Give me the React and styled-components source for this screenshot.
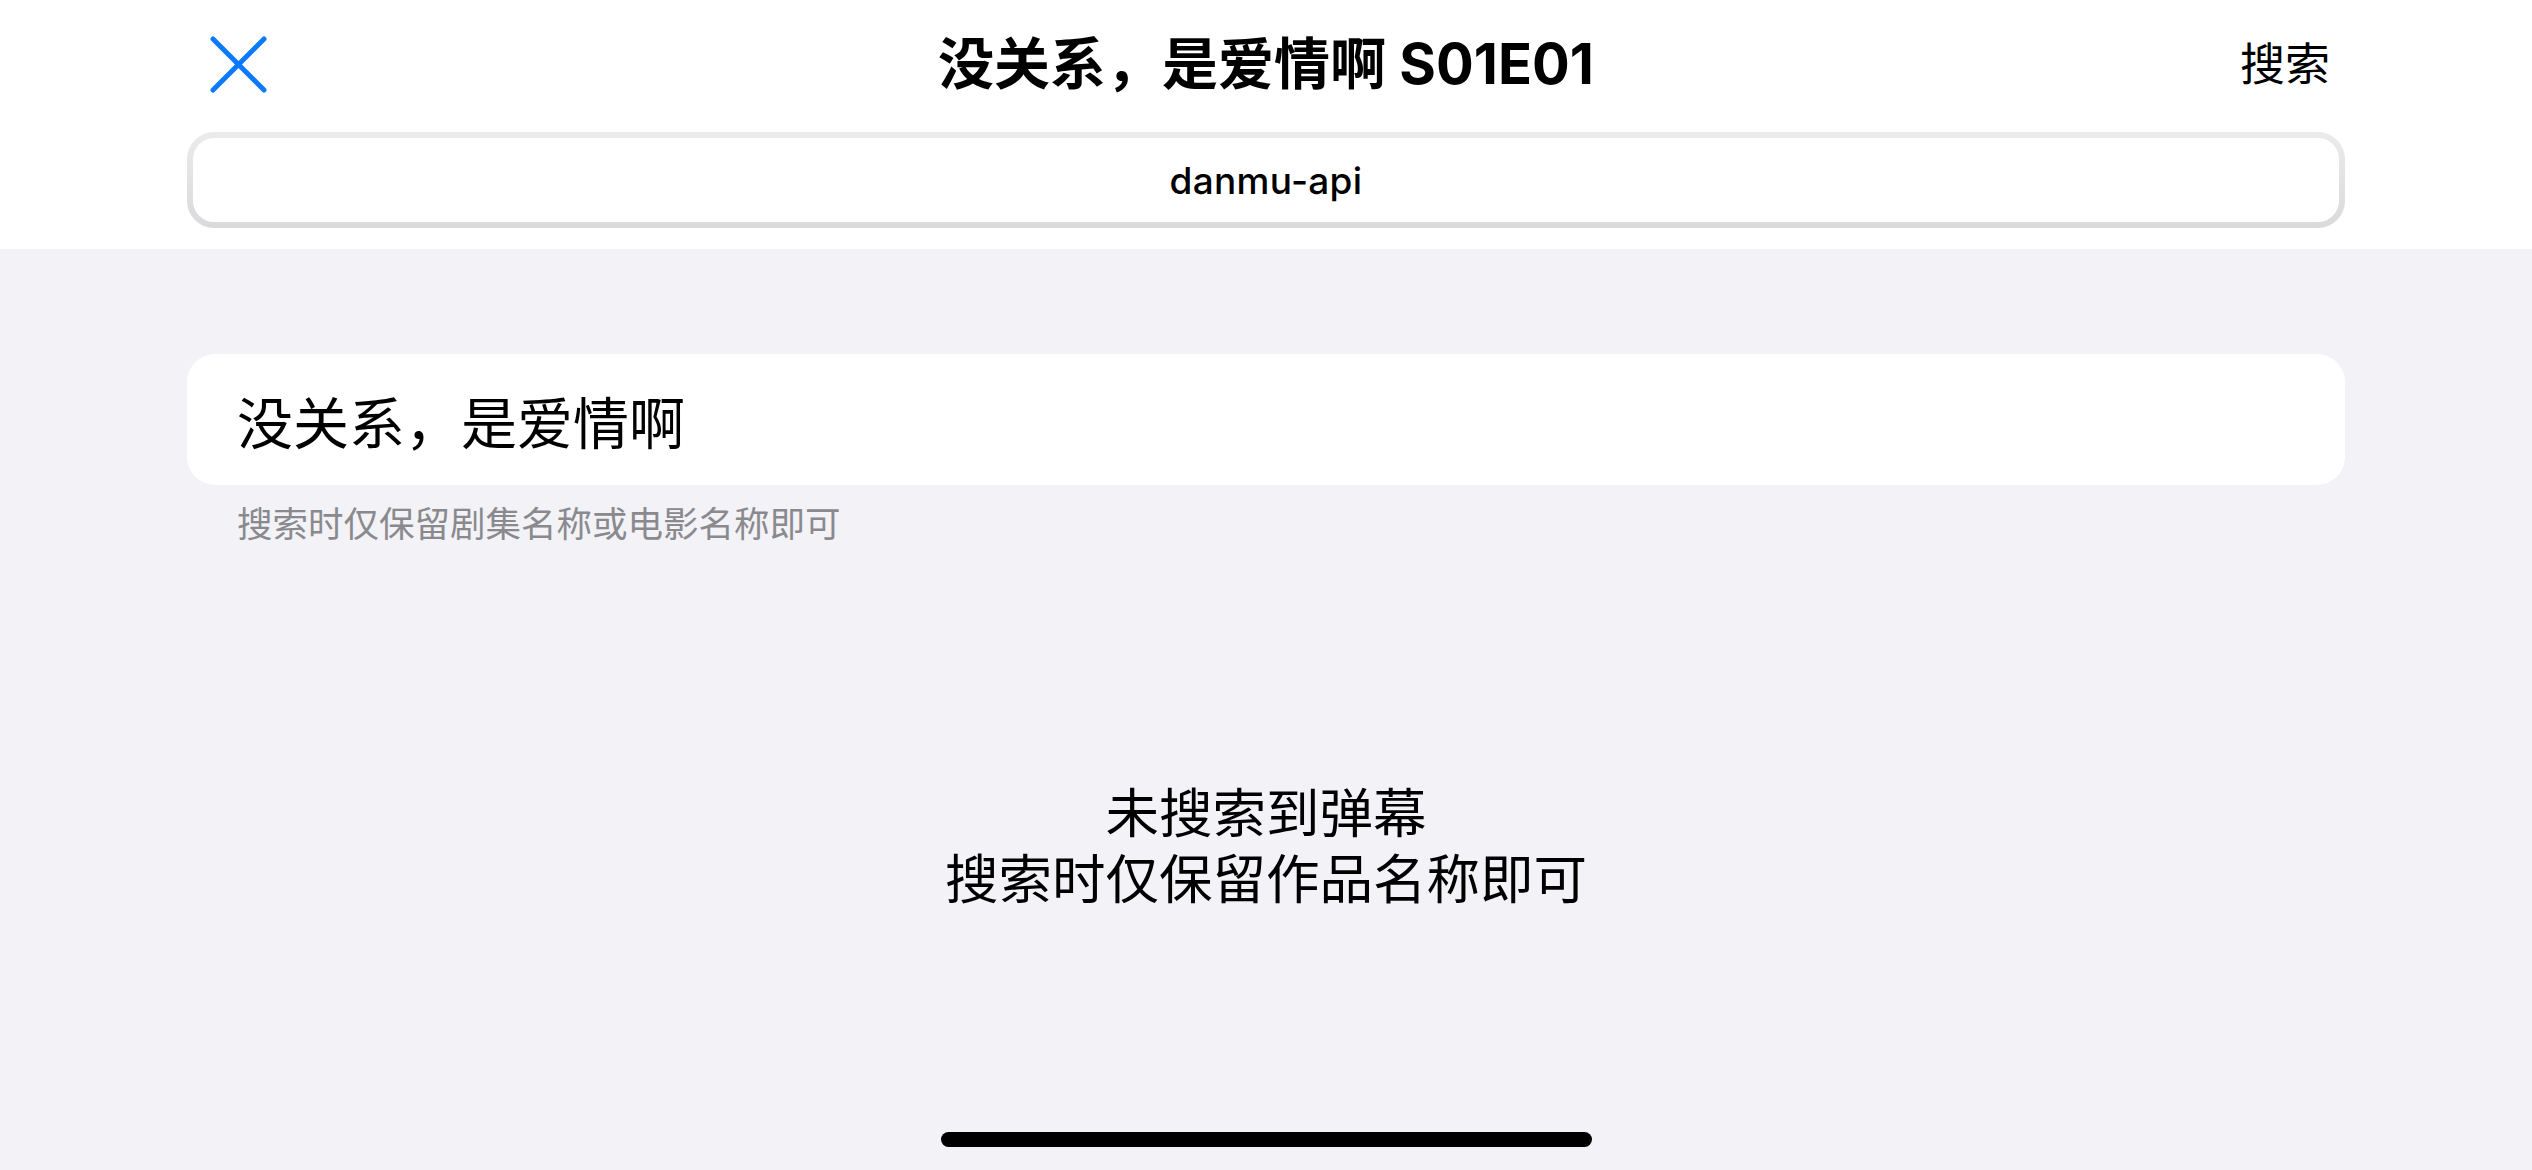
import React from "react";
import styled, { createGlobalStyle } from "styled-components";

const GlobalStyle = createGlobalStyle`
  html, body {
    margin: 0;
    padding: 0;
    background: #f2f2f7;
  }
  body {
    font-family: Inter, "Noto Sans CJK SC", "Noto Sans", sans-serif;
    color: #000;
    -webkit-font-smoothing: antialiased;
  }
  * { box-sizing: border-box; }
`;

const Screen = styled.div`
  width: 2532px;
  height: 1170px;
  display: flex;
  flex-direction: column;
  background: #f2f2f7;
  overflow: hidden;
`;

const Header = styled.header`
  background: #ffffff;
  padding: 0 187px 21px;
  display: flex;
  flex-direction: column;
`;

const NavBar = styled.div`
  height: 128px;
  display: grid;
  grid-template-columns: 1fr auto 1fr;
  align-items: center;
`;

const CloseButton = styled.button`
  justify-self: start;
  width: 57px;
  height: 57px;
  margin-left: 23px;
  padding: 0;
  border: 0;
  background: none;
  display: flex;
  align-items: center;
  justify-content: center;
  cursor: pointer;
`;

const Title = styled.h1`
  margin: 0;
  font-size: 56px;
  font-weight: 700;
  line-height: 1;
  white-space: nowrap;
  letter-spacing: 0;
`;

const ActionButton = styled.button`
  justify-self: end;
  margin-right: 15px;
  padding: 0;
  border: 0;
  background: none;
  font-family: inherit;
  font-size: 45px;
  font-weight: 400;
  color: #000;
  line-height: 1;
  cursor: pointer;
`;

const Segmented = styled.div`
  margin-top: 4px;
  height: 96px;
  padding: 6px;
  border-radius: 27px;
  background: linear-gradient(#ebebed, #dadadc);
  display: flex;
`;

const Segment = styled.div`
  flex: 1;
  border-radius: 21px;
  background: ${(p) => (p.$active ? "#ffffff" : "transparent")};
  display: flex;
  align-items: center;
  justify-content: center;
  font-size: 37px;
  font-weight: 500;
  letter-spacing: 0.3px;
`;

const Content = styled.main`
  flex: 1;
  padding: 105px 187px 0;
  display: flex;
  flex-direction: column;
`;

const SearchField = styled.div`
  height: 131px;
  border-radius: 28px;
  background: #ffffff;
  padding: 0 50px;
  display: flex;
  align-items: center;
  font-size: 56px;
  font-weight: 400;
`;

const Hint = styled.p`
  margin: 18px 0 0 50px;
  font-size: 35.5px;
  line-height: 44px;
  color: #8a8a8e;
`;

const EmptyState = styled.div`
  flex: 1;
  display: flex;
  align-items: center;
  justify-content: center;
  text-align: center;
`;

const EmptyText = styled.p`
  margin: 14px 0 0;
  font-size: 53.5px;
  line-height: 66px;
`;

const HomeIndicator = styled.div`
  align-self: center;
  width: 651px;
  height: 15px;
  margin-bottom: 23px;
  border-radius: 8px;
  background: #000;
`;

function CloseIcon() {
  return (
    <svg width="57" height="57" viewBox="0 0 57 57" fill="none">
      <path
        d="M3 3 L54 54 M54 3 L3 54"
        stroke="#0a7aff"
        strokeWidth="5"
        strokeLinecap="round"
      />
    </svg>
  );
}

export default function App() {
  return (
    <>
      <GlobalStyle />
      <Screen>
        <Header>
          <NavBar>
            <CloseButton aria-label="关闭">
              <CloseIcon />
            </CloseButton>
            <Title>没关系，是爱情啊 S01E01</Title>
            <ActionButton>搜索</ActionButton>
          </NavBar>
          <Segmented>
            <Segment $active>danmu-api</Segment>
          </Segmented>
        </Header>
        <Content>
          <SearchField>没关系，是爱情啊</SearchField>
          <Hint>搜索时仅保留剧集名称或电影名称即可</Hint>
          <EmptyState>
            <EmptyText>
              未搜索到弹幕
              <br />
              搜索时仅保留作品名称即可
            </EmptyText>
          </EmptyState>
        </Content>
        <HomeIndicator />
      </Screen>
    </>
  );
}
